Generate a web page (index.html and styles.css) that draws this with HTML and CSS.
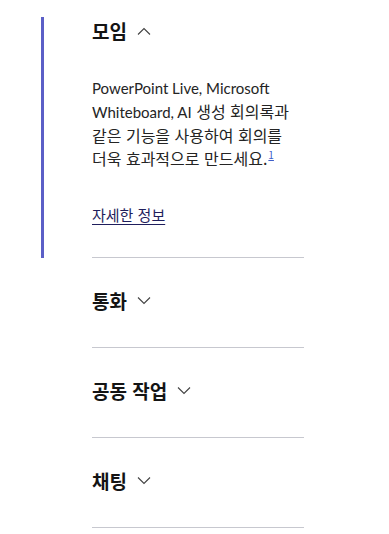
FILE: index.html
```html
<!DOCTYPE html>
<html lang="ko">
<head>
  <meta charset="UTF-8" />
  <title>Teams 기능</title>
  <link rel="stylesheet" href="styles.css">
</head>
<body>
  <div class="accordion">
    <div class="acc-item active">
      <div class="acc-inner">
        <button class="acc-head">
          <span>모임</span>
          <svg class="chevron" width="14" height="8" viewBox="0 0 14 8"><polyline points="1,7.5 7,1.5 13,7.5" fill="none" stroke="#424242" stroke-width="1.1"/></svg>
        </button>
        <div class="acc-panel">
          <p><span lang="en">PowerPoint Live, Microsoft Whiteboard, AI</span> 생성 회의록과 같은 기능을 사용하여 회의를 더욱 효과적으로 만드세요.<sup><a href="#">1</a></sup></p>
          <a class="more" href="#">자세한 정보</a>
        </div>
      </div>
    </div>
    <div class="acc-item">
      <div class="acc-inner">
        <button class="acc-head">
          <span>통화</span>
          <svg class="chevron" width="14" height="8" viewBox="0 0 14 8"><polyline points="1,0.5 7,6.5 13,0.5" fill="none" stroke="#424242" stroke-width="1.1"/></svg>
        </button>
      </div>
    </div>
    <div class="acc-item">
      <div class="acc-inner">
        <button class="acc-head">
          <span>공동 작업</span>
          <svg class="chevron" width="14" height="8" viewBox="0 0 14 8"><polyline points="1,0.5 7,6.5 13,0.5" fill="none" stroke="#424242" stroke-width="1.1"/></svg>
        </button>
      </div>
    </div>
    <div class="acc-item">
      <div class="acc-inner">
        <button class="acc-head">
          <span>채팅</span>
          <svg class="chevron" width="14" height="8" viewBox="0 0 14 8"><polyline points="1,0.5 7,6.5 13,0.5" fill="none" stroke="#424242" stroke-width="1.1"/></svg>
        </button>
      </div>
    </div>
  </div>
</body>
</html>
```

FILE: styles.css
```css
* {
  margin: 0;
  padding: 0;
  box-sizing: border-box;
}

body {
  background: #fff;
  color: #242424;
  font-family: "Noto Sans CJK KR", "Noto Sans", sans-serif;
  padding-top: 17px;
}

.accordion {
  width: 304px;
}

.acc-item {
  margin-left: 41px;
  padding-left: 48px;
  border-left: 3px solid transparent;
}

.acc-item.active {
  border-left-color: #5b5fc7;
}

.acc-inner {
  border-bottom: 1px solid #c7c8cf;
  padding: 29px 0 32px;
}

.acc-item.active .acc-inner {
  padding: 0 0 31px;
}

.acc-head {
  display: flex;
  align-items: center;
  gap: 10px;
  border: none;
  background: none;
  font-family: inherit;
  font-size: 19px;
  font-weight: 700;
  line-height: 28px;
  color: #141414;
  cursor: pointer;
}

.chevron {
  display: block;
}

.acc-panel {
  padding-top: 31px;
}

.acc-panel p {
  font-family: "Noto Sans CJK KR", sans-serif;
  font-size: 16px;
  line-height: 23px;
  color: #242424;
  word-break: keep-all;
}

.acc-panel p span:lang(en) {
  font-family: Lato, "Noto Sans", sans-serif;
  font-size: 15px;
}

.acc-panel sup {
  position: relative;
  top: -6px;
  font-size: 10px;
  line-height: 0;
  vertical-align: baseline;
  margin-left: 1px;
}

.acc-panel sup a {
  color: #3d5ec9;
}

.more {
  display: inline-block;
  margin-top: 33px;
  font-size: 15px;
  line-height: 23px;
  color: #1f1e5c;
  text-decoration: underline;
  text-underline-offset: 3px;
}
```
